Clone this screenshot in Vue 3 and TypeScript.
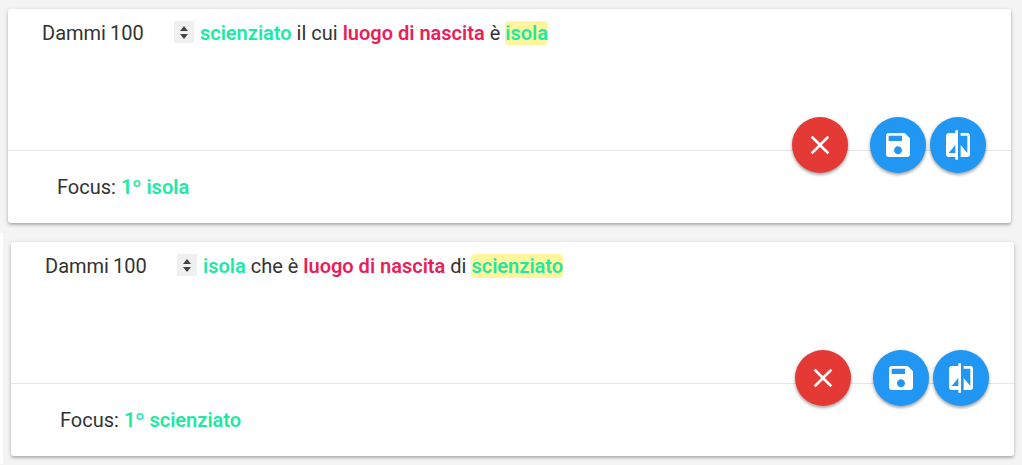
<script setup lang="ts">
import { ref } from 'vue'

interface Part {
  text: string
  kind: 'plain' | 'entity' | 'relation' | 'active'
}

interface Query {
  id: string
  limit: number
  parts: Part[]
  focus: string
}

const queries = ref<Query[]>([
  {
    id: 'first',
    limit: 100,
    parts: [
      { text: 'scienziato', kind: 'entity' },
      { text: 'il cui', kind: 'plain' },
      { text: 'luogo di nascita', kind: 'relation' },
      { text: 'è', kind: 'plain' },
      { text: 'isola', kind: 'active' },
    ],
    focus: '1º isola',
  },
  {
    id: 'second',
    limit: 100,
    parts: [
      { text: 'isola', kind: 'entity' },
      { text: 'che è', kind: 'plain' },
      { text: 'luogo di nascita', kind: 'relation' },
      { text: 'di', kind: 'plain' },
      { text: 'scienziato', kind: 'active' },
    ],
    focus: '1º scienziato',
  },
])
</script>

<template>
  <main class="page">
    <section v-for="query in queries" :key="query.id" class="panel" :class="query.id">
      <article class="card">
        <div class="sentence">
          <label :for="`limit-${query.id}`">Dammi</label>
          <input :id="`limit-${query.id}`" v-model.number="query.limit" class="limit" type="number" min="1" />
          <span class="stepper">
            <button type="button" aria-label="Aumenta" @click="query.limit++">
              <svg viewBox="0 0 10 5"><path d="M5 0 9 5H1z" /></svg>
            </button>
            <button type="button" aria-label="Diminuisci" @click="query.limit--">
              <svg viewBox="0 0 10 5"><path d="M1 0h8L5 5z" /></svg>
            </button>
          </span>
          <p class="words">
            <template v-for="(part, i) in query.parts" :key="i"><span :class="part.kind">{{ part.text }}</span>{{ ' ' }}</template>
          </p>
        </div>
        <footer class="action">
          <p>Focus: <span class="entity">{{ query.focus }}</span></p>
          <div class="fabs">
            <button type="button" class="fab danger" aria-label="Elimina">
              <svg viewBox="0 0 24 24"><path d="M19 6.41 17.59 5 12 10.59 6.41 5 5 6.41 10.59 12 5 17.59 6.41 19 12 13.41 17.59 19 19 17.59 13.41 12z" /></svg>
            </button>
            <button type="button" class="fab" aria-label="Salva">
              <svg viewBox="0 0 24 24"><path d="M17 3H5c-1.11 0-2 .9-2 2v14c0 1.1.89 2 2 2h14c1.1 0 2-.9 2-2V7l-4-4zm-5 16c-1.66 0-3-1.34-3-3s1.34-3 3-3 3 1.34 3 3-1.34 3-3 3zm3-10H5V5h10v4z" /></svg>
            </button>
            <button type="button" class="fab" aria-label="Confronta">
              <svg viewBox="0 0 24 24"><path d="M10 3H5c-1.1 0-2 .9-2 2v14c0 1.1.9 2 2 2h5v2h2V1h-2v2zm0 15H5l5-6v6zm9-15h-5v2h5v13l-5-6v9h5c1.1 0 2-.9 2-2V5c0-1.1-.9-2-2-2z" /></svg>
            </button>
          </div>
        </footer>
      </article>
    </section>
  </main>
</template>

<style>
body {
  margin: 0;
  background: #f4f4f4;
}
</style>

<style scoped>
.page {
  font-family: Roboto, "Liberation Sans", sans-serif;
  font-size: 20px;
  line-height: 24px;
  color: #333;
}

.panel {
  background: #f4f4f4;
  padding: 9px 11px 10px 8px;
}

.panel.second {
  border-left: 3px solid #fff;
  padding: 9px 8px 8px;
}

.card {
  background: #fff;
  border-radius: 3px;
  box-shadow: 0 2px 3px rgba(0, 0, 0, 0.22), 0 1px 5px rgba(0, 0, 0, 0.12);
}

.sentence {
  box-sizing: border-box;
  min-height: 141px;
  padding: 12px 34px;
  display: flex;
  align-items: flex-start;
}

p {
  margin: 0;
}

.limit {
  width: 64px;
  height: 24px;
  margin-left: 4px;
  padding: 0;
  border: 0;
  background: transparent;
  font: inherit;
  color: inherit;
  outline: none;
  appearance: textfield;
}

.limit::-webkit-inner-spin-button {
  display: none;
}

.stepper {
  display: flex;
  flex-direction: column;
  justify-content: center;
  gap: 3px;
  width: 20px;
  height: 22px;
  margin: 0 6px 0 0;
  background: #f0f0f0;
}

.stepper button {
  display: flex;
  justify-content: center;
  padding: 0;
  border: 0;
  background: none;
}

.stepper svg {
  width: 10px;
  height: 5px;
  fill: #444;
}

.entity,
.active {
  font-weight: 600;
  color: #1de9a5;
}

.relation {
  font-weight: 600;
  color: #e91e5a;
}

.active {
  background: #fff59d;
  border-radius: 4px;
}

.action {
  position: relative;
  border-top: 1px solid #e6e6e6;
  padding: 24px 49px;
}

.fabs {
  position: absolute;
  top: -34px;
  right: 25px;
  display: flex;
  gap: 4px;
}

.fab {
  display: flex;
  align-items: center;
  justify-content: center;
  width: 56px;
  height: 56px;
  padding: 0;
  border: 0;
  border-radius: 50%;
  background: #2196f3;
  box-shadow: 0 2px 3px rgba(0, 0, 0, 0.28), 0 1px 4px rgba(0, 0, 0, 0.14);
}

.fab.danger {
  margin-right: 18px;
  background: #e53935;
}

.fab svg {
  width: 32px;
  height: 32px;
  fill: #fff;
}
</style>
